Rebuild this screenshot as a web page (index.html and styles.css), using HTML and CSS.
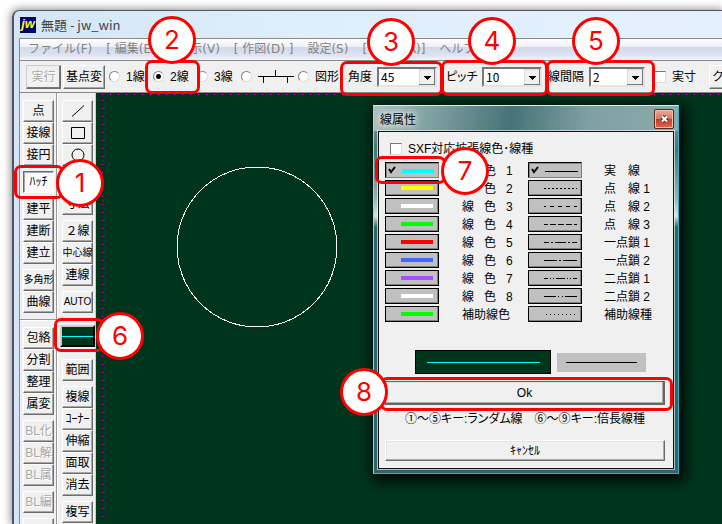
FILE: index.html
```html
<!DOCTYPE html>
<html lang="ja">
<head>
<meta charset="utf-8">
<title>無題 - jw_win</title>
<link rel="stylesheet" href="styles.css">
</head>
<body>
<main class="window">
  <header class="titlebar"><span class="logo">jw</span><h1>無題 - jw_win</h1></header>
  <div class="client">
    <nav class="menu">
      <a href="#">ファイル(F)</a><a href="#">[ 編集(E) ]</a><a href="#">表示(V)</a><a href="#">[ 作図(D) ]</a><a href="#">設定(S)</a><a href="#">[その他(A)]</a><a href="#">ヘルプ(H)</a>
    </nav>
    <form class="toolbar">
      <button type="button" class="btn run" disabled>実行</button>
      <button type="button" class="btn base">基点変</button>
      <label class="option"><input type="radio" name="mode">1線</label>
      <label class="option"><input type="radio" name="mode" checked>2線</label>
      <label class="option"><input type="radio" name="mode">3線</label>
      <label class="option"><input type="radio" name="mode" aria-label="目地"><svg width="36" height="14" viewBox="0 0 36 14"><path d="M0 6.500H36M5.500 6V13M17.500 0V7M29.500 6V13" stroke="#000" fill="none"/></svg></label>
      <label class="option"><input type="radio" name="mode">図形</label>
      <div class="field angle"><label for="angle">角度</label><span class="combo"><select id="angle"><option>45</option></select><svg width="16" height="16" viewBox="0 0 16 16"><path d="M5 7h7v1h-1v1h-1v1H9v1H8v-1H7V9H6V8H5z"/></svg></span></div>
      <div class="field pitch"><label for="pitch">ピッチ</label><span class="combo"><select id="pitch"><option>10</option></select><svg width="16" height="16" viewBox="0 0 16 16"><path d="M5 7h7v1h-1v1h-1v1H9v1H8v-1H7V9H6V8H5z"/></svg></span></div>
      <div class="field space"><label for="space">線間隔</label><span class="combo"><select id="space"><option>2</option></select><svg width="16" height="16" viewBox="0 0 16 16"><path d="M5 7h7v1h-1v1h-1v1H9v1H8v-1H7V9H6V8H5z"/></svg></span></div>
      <label class="option"><input type="checkbox">実寸</label>
      <button type="button" class="btn clear">クリアー</button>
    </form>
    <div class="workspace">
      <aside class="tools">
        <div class="group"><button class="btn">点</button><button class="btn">接線</button><button class="btn">接円</button></div>
        <div class="group"><button class="btn pressed">ﾊｯﾁ</button></div>
        <div class="group"><button class="btn">建平</button><button class="btn">建断</button><button class="btn">建立</button></div>
        <div class="group"><button class="btn tight">多角形</button><button class="btn">曲線</button></div>
        <hr>
        <div class="group"><button class="btn">包絡</button><button class="btn">分割</button><button class="btn">整理</button><button class="btn">属変</button></div>
        <div class="group"><button class="btn" disabled>BL化</button><button class="btn" disabled>BL解</button><button class="btn" disabled>BL属</button></div>
        <div class="group"><button class="btn" disabled>BL編</button></div>
        <div class="group"><button class="btn" disabled></button></div>
      </aside>
      <aside class="tools second">
        <div class="group">
          <button class="btn" aria-label="線"><svg width="14" height="14" viewBox="0 0 14 14"><path d="M1 12.500L13 1.500" stroke="#000"/></svg></button>
          <button class="btn" aria-label="矩形"><svg width="14" height="14" viewBox="0 0 14 14"><path d="M.5 1.500h13v11H.5z" fill="none" stroke="#000"/></svg></button>
          <button class="btn" aria-label="円"><svg width="14" height="14" viewBox="0 0 14 14"><circle cx="7" cy="7" r="6" fill="none" stroke="#000"/></svg></button>
        </div>
        <div class="group"><button class="btn">文字</button><button class="btn">寸法</button></div>
        <div class="group"><button class="btn">２線</button><button class="btn tight">中心線</button><button class="btn">連線</button></div>
        <div class="group"><button class="btn tight">AUTO</button></div>
        <button class="linecolor" aria-label="線属性"></button>
        <div class="group"><button class="btn">範囲</button></div>
        <div class="group"><button class="btn">複線</button><button class="btn">ｺｰﾅｰ</button><button class="btn">伸縮</button><button class="btn">面取</button><button class="btn">消去</button></div>
        <div class="group"><button class="btn">複写</button></div>
      </aside>
      <section class="canvas">
        <svg class="drawing" width="162" height="162" viewBox="0 0 162 162"><circle cx="81" cy="81" r="80" fill="none" stroke="#fff" shape-rendering="crispEdges"/></svg>
        <section class="dialog" role="dialog" aria-labelledby="dialog-title">
          <header><h2 id="dialog-title">線属性</h2><button class="close" aria-label="閉じる"><svg width="9" height="8" viewBox="0 0 9 8"><path d="M2 1.500L7 6.500M7 1.500L2 6.500" stroke="#3b4254" stroke-width="4"/><path d="M2 1.500L7 6.500M7 1.500L2 6.500" stroke="#fff" stroke-width="2"/></svg></button></header>
          <div class="panel">
            <label class="option sxf"><input type="checkbox">SXF対応拡張線色･線種</label>
            <div class="pens">
              <button class="pen current" aria-label="線色 1"><svg width="52" height="14" viewBox="0 0 52 14"><path d="M3 6l2 3 4-5" fill="none" stroke="#000" stroke-width="2"/><path d="M16 8H48" stroke="#0ff" stroke-width="4"/></svg></button><span>線&nbsp;&nbsp; 色&nbsp;&nbsp; 1</span>
              <button class="pen current" aria-label="実線"><svg width="52" height="14" viewBox="0 0 52 14"><path d="M3 6l2 3 4-5" fill="none" stroke="#000" stroke-width="2"/><path d="M16 8.500H49" stroke="#000"/></svg></button><span>実　線</span>
              <button class="pen" aria-label="線色 2"><svg width="52" height="14" viewBox="0 0 52 14"><path d="M15 7H47" stroke="#ff0" stroke-width="4"/></svg></button><span>線&nbsp;&nbsp; 色&nbsp;&nbsp; 2</span>
              <button class="pen" aria-label="点線 1"><svg width="52" height="14" viewBox="0 0 52 14"><path d="M15 7.500H48" stroke="#000" stroke-dasharray="2"/></svg></button><span>点　線 1</span>
              <button class="pen" aria-label="線色 3"><svg width="52" height="14" viewBox="0 0 52 14"><path d="M15 7H47" stroke="#fff" stroke-width="4"/></svg></button><span>線&nbsp;&nbsp; 色&nbsp;&nbsp; 3</span>
              <button class="pen" aria-label="点線 2"><svg width="52" height="14" viewBox="0 0 52 14"><path d="M15 7.500H48" stroke="#000" stroke-dasharray="4" stroke-dashoffset="2"/></svg></button><span>点　線 2</span>
              <button class="pen" aria-label="線色 4"><svg width="52" height="14" viewBox="0 0 52 14"><path d="M15 7H47" stroke="#0f0" stroke-width="4"/></svg></button><span>線&nbsp;&nbsp; 色&nbsp;&nbsp; 4</span>
              <button class="pen" aria-label="点線 3"><svg width="52" height="14" viewBox="0 0 52 14"><path d="M15 7.500H48" stroke="#000" stroke-dasharray="6 2" stroke-dashoffset="2"/></svg></button><span>点　線 3</span>
              <button class="pen" aria-label="線色 5"><svg width="52" height="14" viewBox="0 0 52 14"><path d="M15 7H47" stroke="#f00" stroke-width="4"/></svg></button><span>線&nbsp;&nbsp; 色&nbsp;&nbsp; 5</span>
              <button class="pen" aria-label="一点鎖 1"><svg width="52" height="14" viewBox="0 0 52 14"><path d="M15 7.500H48" stroke="#000" stroke-dasharray="5 2 2 2 11 2 2 2 5"/></svg></button><span>一点鎖 1</span>
              <button class="pen" aria-label="線色 6"><svg width="52" height="14" viewBox="0 0 52 14"><path d="M15 7H47" stroke="#4068ff" stroke-width="4"/></svg></button><span>線&nbsp;&nbsp; 色&nbsp;&nbsp; 6</span>
              <button class="pen" aria-label="一点鎖 2"><svg width="52" height="14" viewBox="0 0 52 14"><path d="M15 7.500H48" stroke="#000" stroke-dasharray="13 2 2 2 14"/></svg></button><span>一点鎖 2</span>
              <button class="pen" aria-label="線色 7"><svg width="52" height="14" viewBox="0 0 52 14"><path d="M15 7H47" stroke="#a850ff" stroke-width="4"/></svg></button><span>線&nbsp;&nbsp; 色&nbsp;&nbsp; 7</span>
              <button class="pen" aria-label="二点鎖 1"><svg width="52" height="14" viewBox="0 0 52 14"><path d="M15 7.500H48" stroke="#000" stroke-dasharray="4 2 1 2 1 2 9 2 1 2 1 2 4"/></svg></button><span>二点鎖 1</span>
              <button class="pen" aria-label="線色 8"><svg width="52" height="14" viewBox="0 0 52 14"><path d="M15 7H47" stroke="#fff" stroke-width="4"/></svg></button><span>線&nbsp;&nbsp; 色&nbsp;&nbsp; 8</span>
              <button class="pen" aria-label="二点鎖 2"><svg width="52" height="14" viewBox="0 0 52 14"><path d="M15 7.500H48" stroke="#000" stroke-dasharray="12 2 1 3 1 2 12"/></svg></button><span>二点鎖 2</span>
              <button class="pen" aria-label="補助線色"><svg width="52" height="14" viewBox="0 0 52 14"><path d="M15 7H47" stroke="#0f0" stroke-width="4"/></svg></button><span>補助線色</span>
              <button class="pen" aria-label="補助線種"><svg width="52" height="14" viewBox="0 0 52 14"><path d="M17 7.500H48" stroke="#000" stroke-dasharray="1 3"/></svg></button><span>補助線種</span>
            </div>
            <div class="preview"><div class="sample dark"></div><div class="sample"></div></div>
            <button class="wide ok">Ok</button>
            <p>①～⑤キー:ランダム線　⑥～⑨キー:倍長線種</p>
            <button class="wide">ｷｬﾝｾﾙ</button>
          </div>
        </section>
      </section>
    </div>
  </div>
</main>
<div class="callouts">
  <span class="frame f1"></span><span class="frame f2"></span><span class="frame f3"></span><span class="frame f4"></span><span class="frame f5"></span><span class="frame f6"></span><span class="frame f7"></span><span class="frame f8"></span>
  <span class="num n1">1</span><span class="num n2">2</span><span class="num n3">3</span><span class="num n4">4</span><span class="num n5">5</span><span class="num n6">6</span><span class="num n7">7</span><span class="num n8">8</span>
</div>
</body>
</html>
```
FILE: styles.css
```css
* { box-sizing: border-box; }
body {
  margin: 0;
  height: 100vh;
  overflow: hidden;
  position: relative;
  display: flex;
  background: #fff;
  color: #000;
  font: 12px/16px "Liberation Sans", "Noto Sans CJK JP", sans-serif;
}
button, select, input { margin: 0; padding: 0; font: inherit; color: inherit; border-radius: 0; }
svg { display: block; flex: none; }
h1, h2, p { margin: 0; font-weight: 400; }

.window {
  flex: 1;
  min-width: 0;
  margin: 10px 0 0 12px;
  padding-left: 5px;
  display: flex;
  flex-direction: column;
  border: 2px solid #50555c;
  border-width: 1px 0 0 2px;
  border-radius: 7px 0 0 0;
  background: linear-gradient(90deg, #d3e5f7, #dfeefb 40%, #e4f1fd);
  box-shadow: 0 0 8px 1px #888;
}
.titlebar { display: flex; align-items: center; gap: 5px; height: 27px; padding: 0 1px; }
.titlebar h1 { font: 13px/20px "Noto Sans CJK JP", sans-serif; color: #444; }
.logo {
  width: 16px;
  height: 16px;
  background: #000078;
  color: #ff0;
  font: italic bold 13px/14px "Liberation Sans", sans-serif;
  text-align: center;
}
.client {
  flex: 1;
  min-height: 0;
  display: flex;
  flex-direction: column;
  border: 1px solid #888;
  border-width: 1px 0 0 1px;
  background: #f0f0f0;
}
.menu {
  display: flex;
  gap: 14px;
  height: 22px;
  padding-left: 8px;
  overflow: hidden;
  white-space: nowrap;
  border-bottom: 1px solid #888;
  background: linear-gradient(#fff, #eef0f8 36%, #d3d9ea 40%, #dfe4f2 80%, #f3f5fa);
}
.menu a { color: #848484; text-decoration: none; font: 12px/20px "DejaVu Sans", "Noto Sans CJK JP", sans-serif; }

.toolbar {
  display: grid;
  grid-template-columns: 37px 46px 44px 44px 44px 57px 50px 98px 102px 106px 55px 60px;
  align-items: center;
  height: 32px;
  padding: 0 0 0 6px;
  overflow: hidden;
  white-space: nowrap;
  border-bottom: 1px solid #888;
}
.btn {
  display: flex;
  align-items: center;
  justify-content: center;
  width: 31px;
  height: 22px;
  background: #f0f0f0;
  border: 1px solid;
  border-color: #fff #6c6c6c #6c6c6c #fff;
  box-shadow: inset -1px -1px #a8a8a8;
  white-space: nowrap;
  overflow: hidden;
}
.btn:disabled { color: #a8a8a8; text-shadow: 1px 1px #fff; }
.toolbar .btn { height: 24px; }
.toolbar .run { width: 35px; border-color: #ccc #6c6c6c #6c6c6c #ccc; box-shadow: inset -1px -1px #777; }
.toolbar .base { width: 42px; }
.toolbar .clear { width: 58px; justify-content: flex-start; padding-left: 2px; }
.btn.pressed { background: #fafafa; border-color: #6c6c6c #fff #fff #6c6c6c; box-shadow: inset 1px 1px #aaa; }
.btn.tight { font-size: 10px; }

.option { display: flex; align-items: center; gap: 6px; }
input { appearance: none; flex: none; background: #fff; }
input[type="radio"] {
  width: 11px;
  height: 11px;
  border-radius: 50%;
  border: 1px solid;
  border-color: #808080 #ddd #ddd #808080;
}
input[type="radio"]:checked { background: radial-gradient(circle, #000 2px, #fff 3px); }
input[type="checkbox"] {
  width: 12px;
  height: 12px;
  border: 1px solid;
  border-color: #777 #ddd #ddd #777;
}
.field { display: flex; align-items: center; }
.angle label { width: 29px; }
.pitch label { width: 36px; font-feature-settings: "palt"; }
.space label { width: 41px; }
.combo { position: relative; width: 60px; }
.space .combo { width: 56px; }
.combo select {
  appearance: none;
  display: block;
  width: 100%;
  height: 20px;
  padding-left: 2px;
  background: #fff;
  border: 2px solid;
  border-color: #777 #e4e4e4 #e4e4e4 #777;
  font: 12px/16px "Noto Sans CJK JP", sans-serif;
}
.combo svg {
  position: absolute;
  top: 2px;
  right: 2px;
  background: #f0f0f0;
  box-shadow: inset -1px -1px #777, inset 1px 1px #ddd;
  pointer-events: none;
}

.workspace { flex: 1; min-height: 0; display: flex; overflow: hidden; }
.tools {
  flex: none;
  width: 37px;
  padding: 7px 0 0 3px;
  display: flex;
  flex-direction: column;
  gap: 5px;
  border-right: 1px solid #999;
}
.tools.second { width: 39px; padding-left: 4px; border-left: 1px solid #fff; border-right-color: #ccc; }
.group { flex: none; }
.tools hr { flex: none; width: 37px; height: 2px; margin: 1px 0 1px -3px; border: 0; border-top: 1px solid #999; border-bottom: 1px solid #fff; }
.linecolor {
  flex: none;
  width: 35px;
  height: 22px;
  margin: 7px 0 7px -2px;
  background: linear-gradient(#0ff, #0ff) 0 9px / 100% 1px no-repeat #00351d;
  border: 2px solid;
  border-color: #ccc #000 #000 #ccc;
}

.canvas {
  flex: 1;
  position: relative;
  overflow: hidden;
  background:
    repeating-linear-gradient(90deg, transparent 0 6px, #f0f 6px 7px, transparent 7px 8px) 0 1px / 100% 1px no-repeat,
    repeating-linear-gradient(transparent 0 7px, #f0f 7px 8px) 6px 0 / 1px 100% no-repeat,
    #00351d;
}
.drawing { position: absolute; left: 80px; top: 73px; }
.dialog {
  position: absolute;
  left: 277px;
  top: 12px;
  width: 306px;
  padding: 0 4px 4px;
  border: 1px solid #27b7c8;
  border-top-color: #dcebed;
  border-left-color: #a9cfd2;
  background: linear-gradient(#83a4a5, #42777c 12%, #8fb4b5 25%, #d5e4e3 30%, #2d666c 33%, #2d666c);
  box-shadow: 3px 4px 12px 4px #000c;
}
.dialog header {
  display: flex;
  align-items: center;
  justify-content: space-between;
  height: 25px;
  margin: 0 -4px;
  padding: 0 4px 0 6px;
  background: linear-gradient(100deg, #a9bfbd, #7e9fa0 20%, #467378 45%, #7ea0a1 70%, #8babac);
}
.dialog h2 { font: 12px/20px "Noto Sans CJK JP", sans-serif; text-shadow: 0 0 6px #fff, 0 0 8px #fff; }
.close {
  display: grid;
  place-items: center;
  width: 20px;
  height: 20px;
  border: 1px solid #5c2721;
  border-radius: 2px;
  background: linear-gradient(#ecac9c, #dd7661 48%, #c43c22 50%, #e1694c);
  box-shadow: inset 0 0 0 1px #f2c0b3;
}
.panel { padding: 8px 8px 7px 6px; border: 1px solid #111; background: #f0f0f0; outline: 1px solid #fff9; }
.sxf { height: 18px; margin: 0 0 4px 5px; }
.pens { display: grid; grid-template-columns: 77px 66px 76px 1fr; grid-auto-rows: 18px; }
.pens span { line-height: 18px; white-space: nowrap; }
.pen {
  width: 54px;
  height: 16px;
  background: #c0c0c0;
  border: 1px solid #000;
  box-shadow: inset -1px -1px #808080;
}
.pen.current { border-color: #000 #808080 #808080 #000; box-shadow: inset 1px 1px #888; }
.preview { display: flex; align-items: center; gap: 6px; margin: 26px 0 7px 30px; }
.sample { width: 89px; height: 19px; background: linear-gradient(#000, #000) center / 71px 1px no-repeat #c0c0c0; }
.sample.dark {
  width: 136px;
  height: 24px;
  border: 1px solid #000;
  background: linear-gradient(#0ff, #0ff) 11px 11px / 113px 1px no-repeat #00351d;
}
.wide {
  display: block;
  width: 100%;
  height: 21px;
  background: #f0f0f0;
  border: 1px solid;
  border-color: #fff #6c6c6c #6c6c6c #fff;
  box-shadow: inset -1px -1px #aaa, inset 1px 1px #e3e3e3;
}
.wide.ok { height: 24px; border-color: #666; border-right-width: 2px; border-bottom-width: 2px; }
.panel p { margin: 6px 0 13px; text-align: center; white-space: nowrap; font-feature-settings: "palt"; }

.callouts { position: absolute; inset: 0; pointer-events: none; overflow: hidden; }
.frame { position: absolute; border: 3px solid #f00; border-radius: 7px; }
.num {
  position: absolute;
  width: 48px;
  height: 48px;
  border: 3px solid #f00;
  border-radius: 50%;
  background: #fff;
  color: #f00;
  font: 26px/42px Inter, sans-serif;
  text-align: center;
}
.f1 { left: 14px; top: 165px; width: 50px; height: 34px; }
.f2 { left: 145px; top: 60px; width: 55px; height: 34px; }
.f3 { left: 340px; top: 61px; width: 103px; height: 35px; }
.f4 { left: 441px; top: 60px; width: 107px; height: 36px; }
.f5 { left: 546px; top: 60px; width: 109px; height: 36px; }
.f6 { left: 54px; top: 318px; width: 50px; height: 34px; }
.f7 { left: 375px; top: 156px; width: 71px; height: 28px; }
.f8 { left: 380px; top: 377px; width: 293px; height: 34px; }
.n1 { left: 56px; top: 159px; }
.n2 { left: 148px; top: 16px; }
.n3 { left: 367px; top: 18px; }
.n4 { left: 468px; top: 17px; }
.n5 { left: 572px; top: 17px; }
.n6 { left: 96px; top: 312px; }
.n7 { left: 441px; top: 147px; }
.n8 { left: 340px; top: 368px; }
```
